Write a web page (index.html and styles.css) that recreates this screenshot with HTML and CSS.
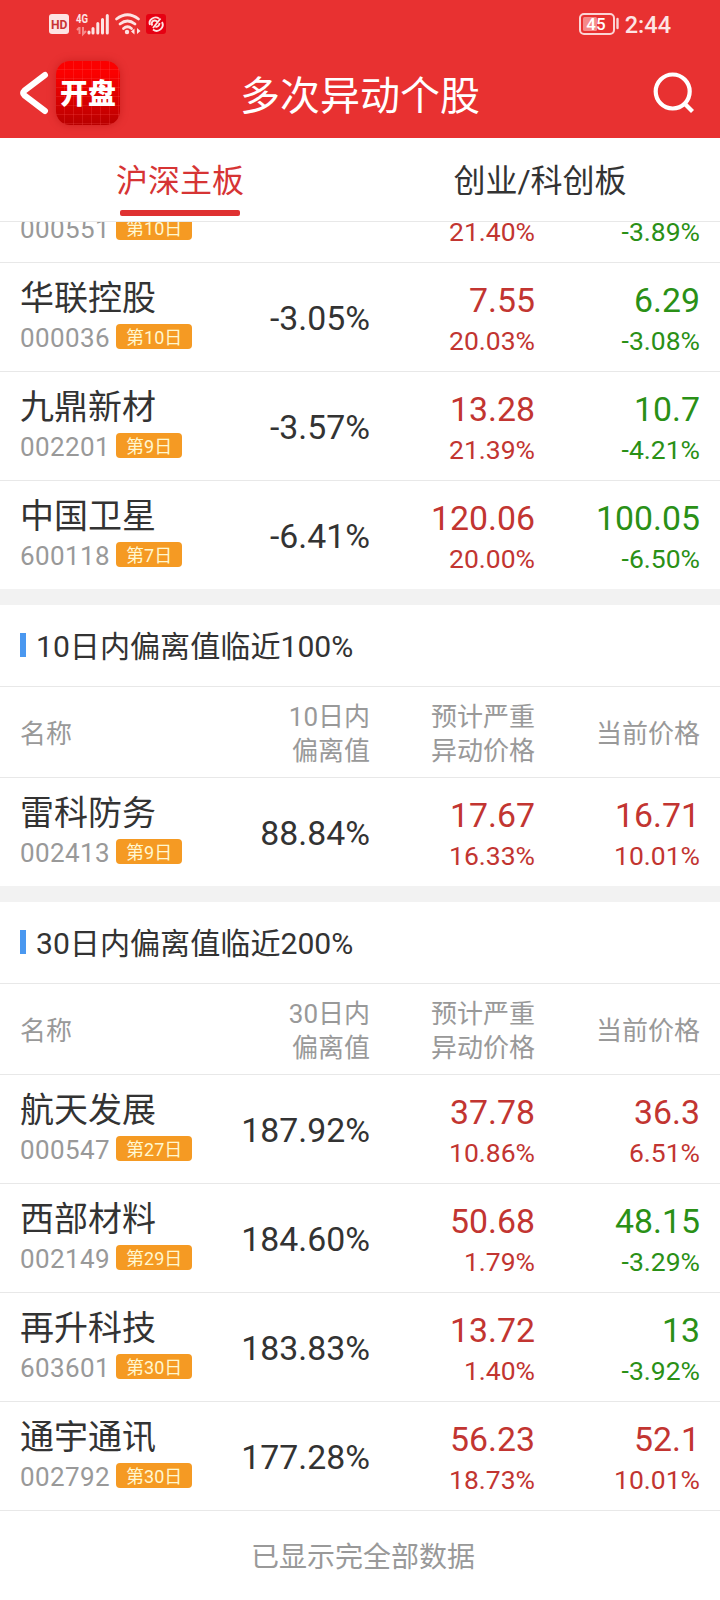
FILE: index.html
```html
<!DOCTYPE html>
<html lang="zh-CN">

<head>
    <meta charset="UTF-8">
    <meta name="viewport" content="width=device-width, initial-scale=1.0">
    <title>多次异动个股</title>
    <link rel="stylesheet" href="styles.css">
</head>

<body>
    <header class="header">
        <div class="status">
            <div class="status-left">
                <svg class="icon-hd" width="20" height="20" viewBox="0 0 20 20">
                    <rect width="20" height="20" rx="3" fill="#fde4e4" />
                    <text x="2" y="14.500" textLength="16.500" lengthAdjust="spacingAndGlyphs" font-size="13" font-weight="700" fill="#c93434">HD</text>
                </svg>
                <svg class="icon-signal" width="34" height="22" viewBox="0 0 34 22">
                    <text x="0" y="9.500" textLength="12" lengthAdjust="spacingAndGlyphs" font-size="12.500" font-weight="700" fill="#fde4e4">4G</text>
                    <path d="M3.500 14v7M1 17l2.500-2.500M7 14v7l3-3" fill="none" stroke="#f58a8a" stroke-width="2" />
                    <path d="M13 19v1M17 15.500v4.500M21.800 10.500v9.500M26.500 6.500v13.500M31.300 2.500v17.500" fill="none" stroke="#fde4e4" stroke-width="3" stroke-linecap="round" />
                </svg>
                <svg class="icon-wifi" width="26" height="22" viewBox="0 0 26 22">
                    <path d="M1.500 6Q12.500-2.500 23.500 6M5 11Q12.500 5 20 11M8.500 15.500Q12.500 12 16.500 15.500" fill="none" stroke="#fde4e4" stroke-width="2.800" stroke-linecap="round" />
                    <circle cx="12" cy="19" r="2.200" fill="#fde4e4" />
                    <path d="M19.500 15.500v6l-3.500-3zM22 15v6l3.500-3z" fill="#fde4e4" />
                </svg>
                <svg class="icon-app" width="20" height="20" viewBox="0 0 20 20">
                    <rect width="20" height="20" rx="3" fill="#e60012" />
                    <path d="M4 11a6 5.500 0 0 1 9-6.500M16 8a6 6 0 0 1-9 7.500M6.500 11.500a3 3 0 0 1 4.500-4M13.500 9a4 4 0 0 1-4 4M7 14L14.500 4.500" fill="none" stroke="#fde4e4" stroke-width="1.900" />
                </svg>
            </div>
            <div class="status-right">
                <svg width="41" height="22" viewBox="0 0 41 22">
                    <rect x="1" y="1" width="34" height="20" rx="4" fill="none" stroke="#fbd5d5" stroke-width="2" />
                    <rect x="4" y="4" width="14" height="14" rx="1.500" fill="#f58a8a" />
                    <text x="17" y="16.500" text-anchor="middle" font-size="17" font-weight="500" fill="#fff">45</text>
                    <path d="M38.500 6v9" stroke="#fbd5d5" stroke-width="2.400" stroke-linecap="round" />
                </svg>
                <span class="time">2:44</span>
            </div>
        </div>
        <div class="navbar">
            <div class="nav-left">
                <svg class="back" width="28" height="42" viewBox="0 0 28 42">
                    <path d="M25 3L4.500 18.500Q2 21 4.500 23.500L25 39" fill="none" stroke="#fff" stroke-width="6" stroke-linecap="round" />
                </svg>
                <div class="logo">开盘</div>
            </div>
            <h1>多次异动个股</h1>
            <svg class="search" width="42" height="42" viewBox="0 0 42 42">
                <circle cx="19.700" cy="19.500" r="17" fill="none" stroke="#fff" stroke-width="4.200" />
                <path d="M31.500 31.500L39.500 39.500" stroke="#fff" stroke-width="4.200" />
            </svg>
        </div>
    </header>

    <nav class="tabs">
        <div class="tab active"><span>沪深主板</span></div>
        <div class="tab"><span>创业/科创板</span></div>
    </nav>

    <main class="list">
        <section class="group group-scrolled">
            <div class="row">
                <div class="stock">
                    <p class="name"></p>
                    <p class="code">000551<span class="tag">第10日</span></p>
                </div>
                <div class="value"></div>
                <div class="price up"><b></b><span>21.40%</span></div>
                <div class="price down"><b></b><span>-3.89%</span></div>
            </div>
            <div class="row">
                <div class="stock">
                    <p class="name">华联控股</p>
                    <p class="code">000036<span class="tag">第10日</span></p>
                </div>
                <div class="value">-3.05%</div>
                <div class="price up"><b>7.55</b><span>20.03%</span></div>
                <div class="price down"><b>6.29</b><span>-3.08%</span></div>
            </div>
            <div class="row">
                <div class="stock">
                    <p class="name">九鼎新材</p>
                    <p class="code">002201<span class="tag">第9日</span></p>
                </div>
                <div class="value">-3.57%</div>
                <div class="price up"><b>13.28</b><span>21.39%</span></div>
                <div class="price down"><b>10.7</b><span>-4.21%</span></div>
            </div>
            <div class="row">
                <div class="stock">
                    <p class="name">中国卫星</p>
                    <p class="code">600118<span class="tag">第7日</span></p>
                </div>
                <div class="value">-6.41%</div>
                <div class="price up"><b>120.06</b><span>20.00%</span></div>
                <div class="price down"><b>100.05</b><span>-6.50%</span></div>
            </div>
        </section>

        <section class="group">
            <h2>10日内偏离值临近100%</h2>
            <div class="row head">
                <div>名称</div>
                <div>10日内<br>偏离值</div>
                <div>预计严重<br>异动价格</div>
                <div>当前价格</div>
            </div>
            <div class="row">
                <div class="stock">
                    <p class="name">雷科防务</p>
                    <p class="code">002413<span class="tag">第9日</span></p>
                </div>
                <div class="value">88.84%</div>
                <div class="price up"><b>17.67</b><span>16.33%</span></div>
                <div class="price up"><b>16.71</b><span>10.01%</span></div>
            </div>
        </section>

        <section class="group">
            <h2>30日内偏离值临近200%</h2>
            <div class="row head">
                <div>名称</div>
                <div>30日内<br>偏离值</div>
                <div>预计严重<br>异动价格</div>
                <div>当前价格</div>
            </div>
            <div class="row">
                <div class="stock">
                    <p class="name">航天发展</p>
                    <p class="code">000547<span class="tag">第27日</span></p>
                </div>
                <div class="value">187.92%</div>
                <div class="price up"><b>37.78</b><span>10.86%</span></div>
                <div class="price up"><b>36.3</b><span>6.51%</span></div>
            </div>
            <div class="row">
                <div class="stock">
                    <p class="name">西部材料</p>
                    <p class="code">002149<span class="tag">第29日</span></p>
                </div>
                <div class="value">184.60%</div>
                <div class="price up"><b>50.68</b><span>1.79%</span></div>
                <div class="price down"><b>48.15</b><span>-3.29%</span></div>
            </div>
            <div class="row">
                <div class="stock">
                    <p class="name">再升科技</p>
                    <p class="code">603601<span class="tag">第30日</span></p>
                </div>
                <div class="value">183.83%</div>
                <div class="price up"><b>13.72</b><span>1.40%</span></div>
                <div class="price down"><b>13</b><span>-3.92%</span></div>
            </div>
            <div class="row">
                <div class="stock">
                    <p class="name">通宇通讯</p>
                    <p class="code">002792<span class="tag">第30日</span></p>
                </div>
                <div class="value">177.28%</div>
                <div class="price up"><b>56.23</b><span>18.73%</span></div>
                <div class="price up"><b>52.1</b><span>10.01%</span></div>
            </div>
        </section>

        <p class="end">已显示完全部数据</p>
    </main>
</body>

</html>
```
FILE: styles.css
```css
* {
    margin: 0;
    padding: 0;
    box-sizing: border-box;
}

body {
    width: 720px;
    height: 1600px;
    overflow: hidden;
    display: flex;
    flex-direction: column;
    background: #fff;
    color: #333;
    font-family: Roboto, "Noto Sans CJK SC", sans-serif;
}

svg {
    display: block;
    overflow: visible;
}

/* 顶部 */

.header {
    flex: none;
    height: 138px;
    background: #e83131;
    color: #fff;
}

.status {
    height: 48px;
    padding: 0 49px;
    display: flex;
    justify-content: space-between;
    align-items: center;
}

.status-left,
.status-right {
    display: flex;
    align-items: center;
}

.icon-signal {
    margin-left: 7px;
}

.icon-wifi {
    margin-left: 5px;
}

.icon-app {
    margin-left: 5px;
}

.time {
    margin-left: 5px;
    padding-top: 2px;
    font-size: 23.5px;
    line-height: 28px;
    font-weight: 500;
    color: #fde4e4;
}

.navbar {
    height: 90px;
    padding: 0 25px 0 20px;
    display: grid;
    grid-template-columns: 200px 1fr 195px;
    align-items: center;
}

.nav-left {
    display: flex;
    align-items: center;
    gap: 8px;
}

.logo {
    width: 64px;
    height: 64px;
    padding-top: 2px;
    border-radius: 14px;
    background:
        repeating-linear-gradient(90deg, transparent 0 8px, rgba(255, 90, 90, .22) 8px 9px),
        repeating-linear-gradient(transparent 0 8px, rgba(255, 90, 90, .22) 8px 9px),
        linear-gradient(#fb0000 20%, #b80000);
    box-shadow: 0 0 8px rgba(150, 0, 0, .35);
    font-size: 28px;
    line-height: 64px;
    font-weight: 900;
    text-align: center;
}

h1 {
    font-size: 40px;
    line-height: 60px;
    font-weight: 400;
    text-align: center;
    padding-top: 8px;
}

.search {
    justify-self: end;
}

/* 切换 */

.tabs {
    flex: none;
    height: 84px;
    display: flex;
    border-bottom: 1px solid #e8e8e8;
}

.tab {
    flex: 1;
    display: flex;
    flex-direction: column;
    align-items: center;
    padding-top: 19px;
    font-size: 32px;
    line-height: 48px;
}

.tab.active {
    color: #d63434;
}

.tab.active::after {
    content: "";
    width: 120px;
    height: 6px;
    margin-top: 5px;
    border-radius: 2px;
    background: #df3131;
}

/* 列表 */

.list {
    flex: 1;
    overflow: hidden;
}

.group + .group {
    border-top: 16px solid #f2f2f2;
}

.group-scrolled {
    margin-top: -68px;
}

h2 {
    height: 82px;
    padding: 3px 0 0 20px;
    display: flex;
    align-items: center;
    border-bottom: 1px solid #e8e8e8;
    font-size: 30.1px;
    line-height: 44px;
    font-weight: 400;
}

h2::before {
    content: "";
    width: 6px;
    height: 24px;
    margin: 0 10px 5px 0;
    background: #4a98f0;
}

.row {
    height: 109px;
    padding: 0 20px;
    display: grid;
    grid-template-columns: 200px 150px 165px 165px;
    align-items: center;
    text-align: right;
    border-bottom: 1px solid #e8e8e8;
}

.group:not(:last-of-type) .row:last-child {
    height: 108px;
    border-bottom: 0;
}

.head {
    height: 91px;
    padding-top: 4px;
    font-size: 26px;
    line-height: 34px;
    color: #999;
}

.head div:first-child,
.stock {
    text-align: left;
}

.name {
    height: 44px;
    font-size: 34px;
    line-height: 44px;
}

.code {
    height: 38px;
    padding-bottom: 2px;
    display: flex;
    align-items: center;
    font-size: 26px;
    letter-spacing: .4px;
    color: #999;
}

.tag {
    height: 25px;
    padding: 0 10px;
    margin: 0 0 3px 6px;
    border-radius: 4px;
    background: #f59a23;
    color: #fff7d0;
    font-size: 18px;
    line-height: 27px;
    letter-spacing: 0;
}

.value {
    padding-top: 2px;
    font-size: 33.8px;
}

.price {
    padding-top: 5px;
}

.price b {
    display: block;
    height: 42px;
    font-size: 33.8px;
    line-height: 44px;
    font-weight: 400;
}

.price span {
    display: block;
    font-size: 26.5px;
    line-height: 39px;
}

.up {
    color: #c23531;
}

.down {
    color: #2a9016;
}

.end {
    padding: 25px 0 0 6px;
    font-size: 28px;
    line-height: 44px;
    text-align: center;
    color: #999;
}
```
